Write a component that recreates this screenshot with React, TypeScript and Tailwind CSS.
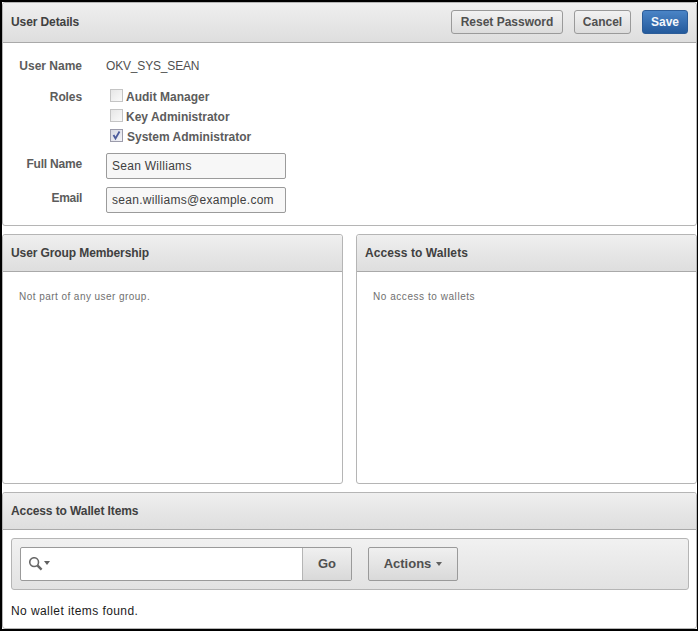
import type { ReactNode } from 'react'

const font = "font-['Liberation_Sans',Arial,sans-serif]"

function PanelHeader({ title, height, tracking = 'tracking-[-0.1px]', children }: { title: string; height: string; tracking?: string; children?: ReactNode }) {
  return (
    <div className={`${height} flex items-center justify-between rounded-t-[3px] border-b border-[#a9a9a9] bg-gradient-to-b from-[#efefef] to-[#dedede] pl-[8px] pr-[8px]`}>
      <h2 className={`${tracking} text-[12px] font-bold text-[#404040]`}>{title}</h2>
      {children}
    </div>
  )
}

function HeaderButton({ label, width, primary }: { label: string; width: string; primary?: boolean }) {
  return (
    <button
      type="button"
      className={`${width} h-[24px] rounded-[3px] border text-[12px] font-bold ${
        primary
          ? 'border-[#2c5c98] bg-gradient-to-b from-[#4a84c6] to-[#245a9c] text-[#f4f7fb]'
          : 'border-[#9a9a9a] bg-gradient-to-b from-[#f2f2f2] to-[#dcdcdc] text-[#505050]'
      }`}
    >
      {label}
    </button>
  )
}

function Role({ label, checked, gap }: { label: string; checked?: boolean; gap: string }) {
  return (
    <div className="flex h-[20px] items-center">
      <span className={`relative mb-[4px] h-[13px] w-[13px] border bg-gradient-to-br ${
        checked ? 'border-[#9c9cab] from-[#d5d7e2] to-[#f4f4f8]' : 'border-[#c4c4c4] from-[#e6e6e6] to-[#fafafa]'
      }`}>
        {checked && (
          <svg viewBox="0 0 13 13" className="absolute left-[-1px] top-[-1px] h-[13px] w-[13px]">
            <path d="M3.5 6 L5.5 9.5 L9.5 2.5" fill="none" stroke="#4a5a9c" strokeWidth="1.8" />
          </svg>
        )}
      </span>
      <span className={`${gap} text-[12px] font-bold text-[#5c5c5c]`}>{label}</span>
    </div>
  )
}

function TextField({ value }: { value: string }) {
  return (
    <div className="flex h-[26px] w-[180px] items-center rounded-[2px] border border-[#9b9b9b] bg-[#f7f7f7] pl-[5px] text-[12px] tracking-[0.28px] text-[#404040]">
      {value}
    </div>
  )
}

export default function App() {
  return (
    <div className={`${font} flex h-[631px] w-[698px] flex-col border-y-2 border-l-2 border-r border-black bg-white`}>
      <section className="h-[224px] shrink-0 rounded-[3px] border border-[#b5b5b5]">
        <PanelHeader title="User Details" height="h-[40px] pb-[2px]">
          <div className="flex gap-[11px]">
            <HeaderButton label="Reset Password" width="w-[112px]" />
            <HeaderButton label="Cancel" width="w-[57px]" />
            <HeaderButton label="Save" width="w-[46px]" primary />
          </div>
        </PanelHeader>
        <div className="grid grid-cols-[79px_1fr] gap-x-[24px] pt-[14px]">
          <div className="flex h-[18px] items-center justify-end text-[12px] font-bold text-[#5c5c5c]">User Name</div>
          <div className="flex h-[18px] items-center text-[12px] tracking-[-0.17px] text-[#505050]">OKV_SYS_SEAN</div>
          <div className="mt-[13px] text-right text-[12px] font-bold tracking-[-0.1px] text-[#5c5c5c]">Roles</div>
          <div className="mt-[12px] pl-[4px]">
            <Role label="Audit Manager" gap="ml-[3px]" />
            <Role label="Key Administrator" gap="ml-[3px]" />
            <Role checked label="System Administrator" gap="ml-[4px]" />
          </div>
          <div className="mt-[8px] text-right text-[12px] font-bold tracking-[-0.2px] text-[#5c5c5c]">Full Name</div>
          <div className="mt-[6px]"><TextField value="Sean Williams" /></div>
          <div className="mt-[10px] text-right text-[12px] font-bold tracking-[-0.3px] text-[#5c5c5c]">Email</div>
          <div className="mt-[8px]"><TextField value="sean.williams@example.com" /></div>
        </div>
      </section>

      <div className="mt-[8px] flex h-[250px] shrink-0 gap-[13px]">
        <section className="w-[341px] rounded-[3px] border border-[#b5b5b5]">
          <PanelHeader title="User Group Membership" height="h-[37px]" />
          <p className="pl-[16px] pt-[17px] text-[10px] tracking-[0.45px] text-[#707070]">Not part of any user group.</p>
        </section>
        <section className="flex-1 rounded-[3px] border border-[#b5b5b5]">
          <PanelHeader title="Access to Wallets" height="h-[37px]" tracking="tracking-[0.08px]" />
          <p className="pl-[16px] pt-[17px] text-[10px] tracking-[0.55px] text-[#707070]">No access to wallets</p>
        </section>
      </div>

      <section className="mt-[8px] h-[137px] shrink-0 rounded-[3px] border border-[#b5b5b5]">
        <PanelHeader title="Access to Wallet Items" height="h-[37px]" />
        <div className="ml-[8px] mr-[7px] mt-[8px] flex h-[52px] items-center rounded-[3px] border border-[#b5b5b5] bg-gradient-to-b from-[#f1f1f1] to-[#e2e2e2] pl-[8px]">
          <div className="flex h-[34px] w-[332px] rounded-[2px] border border-[#9a9a9a] bg-white">
            <div className="flex flex-1 items-center pl-[8px]">
              <svg viewBox="1 1 15 15" className="h-[14px] w-[14px]">
                <circle cx="6.5" cy="6.5" r="4.7" fill="none" stroke="#686868" strokeWidth="1.7" />
                <path d="M10 10 L14.5 14.5" stroke="#686868" strokeWidth="2.6" />
              </svg>
              <svg viewBox="0 0 6 4" className="ml-[1px] mb-[2px] h-[4px] w-[6px]">
                <path d="M0 0 H6 L3 4 Z" fill="#606060" />
              </svg>
            </div>
            <button type="button" className="w-[49px] border-l border-[#b5b5b5] bg-gradient-to-b from-[#f0f0f0] to-[#d9d9d9] text-[13px] font-bold text-[#505050]">
              Go
            </button>
          </div>
          <button type="button" className="ml-[16px] flex h-[34px] w-[90px] items-center justify-center rounded-[2px] border border-[#9a9a9a] bg-gradient-to-b from-[#f0f0f0] to-[#d9d9d9] text-[13px] font-bold text-[#505050]">
            Actions
            <svg viewBox="0 0 6 4" className="ml-[5px] h-[4px] w-[6px]">
              <path d="M0 0 H6 L3 4 Z" fill="#606060" />
            </svg>
          </button>
        </div>
        <p className="pl-[8px] pt-[12px] text-[12px] tracking-[0.42px] text-[#1a1a1a]">No wallet items found.</p>
      </section>
    </div>
  )
}
